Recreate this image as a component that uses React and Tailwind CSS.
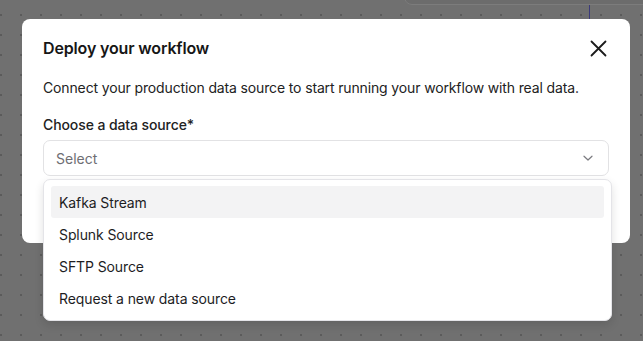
import React from "react";

const sources = ["Kafka Stream", "Splunk Source", "SFTP Source", "Request a new data source"];

export default function App() {
  const [active, setActive] = React.useState(0);

  return (
    <div
      className="relative w-[643px] h-[341px] overflow-hidden bg-[#707070] bg-[radial-gradient(circle,#5a5a5a_0.7px,transparent_0.9px)] bg-[size:20px_20px] bg-[position:-9px_5px] pt-[19px] px-[22px]"
      style={{ fontFamily: "Inter, 'Noto Sans', sans-serif" }}
    >
      {/* canvas bits peeking out behind the overlay */}
      <div className="absolute left-[404px] -top-[20px] w-[300px] h-[25px] rounded-[8px] border border-[#7c7c7c] bg-[#6c6c6c]" />
      <div className="absolute left-[589px] top-[5px] w-px h-[14px] bg-[#3b3a7a]" />

      <div className="relative w-[608px] h-[224px] rounded-[8px] bg-white px-[21px] pt-[17px]">
        <div className="flex items-center justify-between h-6">
          <h2 className="text-[16px] font-semibold text-[#161616] tracking-[-0.15px]">Deploy your workflow</h2>
          <button className="mr-[2px] text-[#1b1b1b]">
            <svg width="17" height="17" viewBox="0 0 17 17" fill="none" stroke="currentColor" strokeWidth="1.8" strokeLinecap="round">
              <path d="M1.5 1.5l14 14M15.5 1.5l-14 14" />
            </svg>
          </button>
        </div>

        <p className="mt-[18px] text-[14px] leading-5 text-[#222] tracking-[-0.14px]">
          Connect your production data source to start running your workflow with real data.
        </p>

        <label className="block mt-[17px] text-[14px] leading-5 font-medium text-[#222] tracking-[-0.1px]">Choose a data source*</label>

        <div className="relative mt-[5px]">
          <div className="flex items-center justify-between h-[36px] w-[566px] rounded-[7px] border border-[#e2e2e4] pl-[12px] pr-[14px]">
            <span className="text-[14px] text-[#6e6e73]">Select</span>
            <svg width="12" height="12" viewBox="0 0 12 12" fill="none" stroke="#7a7a7f" strokeWidth="1.2" strokeLinecap="round" strokeLinejoin="round">
              <path d="M2 4.2l4 3.8 4-3.8" />
            </svg>
          </div>

          <div className="absolute left-0 top-[39px] z-10 w-[569px] rounded-[7px] border border-[#e4e4e8] bg-white px-[7px] pt-[6px] pb-[6px] shadow-[0_4px_10px_rgba(0,0,0,0.12)]">
            {sources.map((s, i) => (
              <div
                key={s}
                onMouseEnter={() => setActive(i)}
                className={
                  "flex items-center h-[32px] rounded-[3px] px-[8px] text-[14px] text-[#1d1d1f] tracking-[-0.1px] " +
                  (active === i ? "bg-[#f3f3f4]" : "")
                }
              >
                {s}
              </div>
            ))}
          </div>
        </div>
      </div>
    </div>
  );
}
